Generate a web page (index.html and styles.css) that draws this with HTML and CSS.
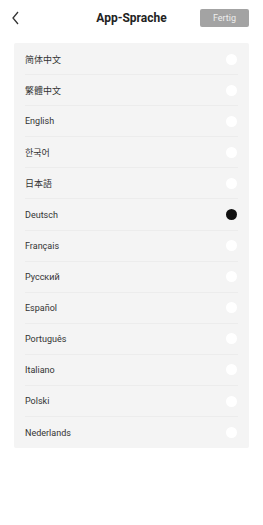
FILE: index.html
```html
<!DOCTYPE html>
<html>
<head>
    <link rel="stylesheet" href="styles.css">
</head>
<body>
    <div class="header">
        <svg class="back" width="10" height="14" viewBox="0 0 10 14">
            <path d="M7 1 L2 7 L7 13" fill="none" stroke="#333" stroke-width="1.3"/>
        </svg>
        <div class="title">App-Sprache</div>
        <div class="done">Fertig</div>
    </div>

    <div class="list">
        <div class="row"><span>简体中文</span><i class="radio"></i></div>
        <div class="row"><span>繁體中文</span><i class="radio"></i></div>
        <div class="row"><span>English</span><i class="radio"></i></div>
        <div class="row"><span>한국어</span><i class="radio"></i></div>
        <div class="row"><span>日本語</span><i class="radio"></i></div>
        <div class="row"><span>Deutsch</span><i class="radio checked"></i></div>
        <div class="row"><span>Français</span><i class="radio"></i></div>
        <div class="row"><span>Русский</span><i class="radio"></i></div>
        <div class="row"><span>Español</span><i class="radio"></i></div>
        <div class="row"><span>Português</span><i class="radio"></i></div>
        <div class="row"><span>Italiano</span><i class="radio"></i></div>
        <div class="row"><span>Polski</span><i class="radio"></i></div>
        <div class="row"><span>Nederlands</span><i class="radio"></i></div>
    </div>
</body>
</html>
```

FILE: styles.css
```css
body {
    font-family: Roboto, "Noto Sans CJK SC", sans-serif;
    margin: 0;
    background: #fff;
    color: #333;
}

.header {
    height: 36px;
    display: flex;
    align-items: center;
    justify-content: space-between;
    padding: 0 14px 0 11px;
    position: relative;
}

.back {
    display: block;
}

.title {
    position: absolute;
    left: 0;
    right: 0;
    text-align: center;
    font-size: 12px;
    font-weight: bold;
    color: #222;
    pointer-events: none;
}

.done {
    width: 49px;
    height: 18px;
    line-height: 18px;
    background: #a3a3a3;
    color: #eee;
    font-size: 9px;
    text-align: center;
    border-radius: 2px;
}

.list {
    margin: 7px 14px 0;
    padding-top: 1px;
    background: #f4f4f4;
    border-radius: 2px;
}

.row {
    height: 31.1px;
    margin: 0 11px;
    display: flex;
    align-items: center;
    justify-content: space-between;
    font-size: 9px;
    color: #333;
    border-bottom: 1px solid #ececec;
    box-sizing: border-box;
}

.row:last-child {
    border-bottom: none;
}

.radio {
    width: 11px;
    height: 11px;
    border-radius: 50%;
    background: #fff;
    margin-right: 1px;
}

.radio.checked {
    background: #111;
}
```
